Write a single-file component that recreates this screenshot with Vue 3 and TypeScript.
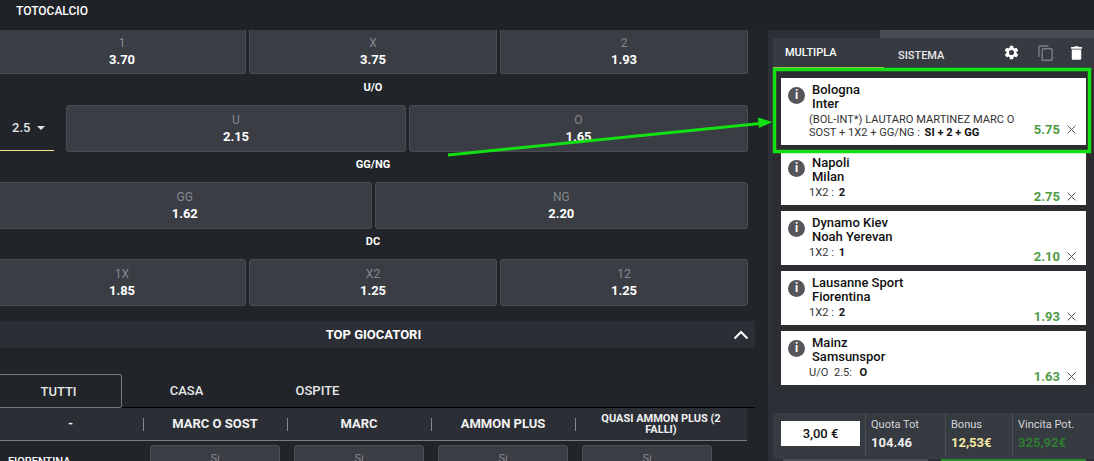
<script setup lang="ts">
const bets = [
  { home: 'Bologna', away: 'Inter', market: '(BOL-INT*) LAUTARO MARTINEZ MARC O SOST + 1X2 + GG/NG :', pick: 'SI + 2 + GG', odd: '5.75', big: true },
  { home: 'Napoli', away: 'Milan', market: '1X2 :', pick: '2', odd: '2.75', big: false },
  { home: 'Dynamo Kiev', away: 'Noah Yerevan', market: '1X2 :', pick: '1', odd: '2.10', big: false },
  { home: 'Lausanne Sport', away: 'Fiorentina', market: '1X2 :', pick: '2', odd: '1.93', big: false },
  { home: 'Mainz', away: 'Samsunspor', market: 'U/O  2.5: ', pick: 'O', odd: '1.63', big: false },
]
const columns = ['-', 'MARC O SOST', 'MARC', 'AMMON PLUS']
</script>

<template>
  <div class="page">
    <header class="topbar">TOTOCALCIO</header>
    <div class="body">
      <main class="main">
        <div class="odds odds--three">
          <button class="tile"><span>1</span><b>3.70</b></button>
          <button class="tile"><span>X</span><b>3.75</b></button>
          <button class="tile"><span>2</span><b>1.93</b></button>
        </div>
        <h4 class="market market--first">U/O</h4>
        <div class="odds odds--uo">
          <div class="select">2.5 <i class="caret"></i></div>
          <button class="tile"><span>U</span><b>2.15</b></button>
          <button class="tile"><span>O</span><b>1.65</b></button>
        </div>
        <h4 class="market">GG/NG</h4>
        <div class="odds odds--two">
          <button class="tile"><span>GG</span><b>1.62</b></button>
          <button class="tile"><span>NG</span><b>2.20</b></button>
        </div>
        <h4 class="market">DC</h4>
        <div class="odds odds--three">
          <button class="tile"><span>1X</span><b>1.85</b></button>
          <button class="tile"><span>X2</span><b>1.25</b></button>
          <button class="tile"><span>12</span><b>1.25</b></button>
        </div>

        <div class="section">
          <span>TOP GIOCATORI</span>
          <svg class="chevron" width="16" height="10" viewBox="0 0 16 10">
            <path d="M1.5 8.5 8 2l6.5 6.5" fill="none" stroke="#fff" stroke-width="2" />
          </svg>
        </div>

        <div class="tabs">
          <div class="tab tab--active">TUTTI</div>
          <div class="tab">CASA</div>
          <div class="tab">OSPITE</div>
        </div>

        <div class="thead">
          <div v-for="col in columns" :key="col" class="th">{{ col }}</div>
          <div class="th th--small">QUASI AMMON PLUS (2 FALLI)</div>
        </div>
        <div class="row">
          <div class="player">FIORENTINA</div>
          <div class="si-list">
            <div v-for="n in 4" :key="n" class="si">Si</div>
          </div>
        </div>
      </main>

      <aside class="slip">
        <div class="slip__strip"></div>
        <div class="slip__box">
          <div class="slip__tabs">
            <div class="slip__tab slip__tab--active">MULTIPLA</div>
            <div class="slip__tab slip__tab--second">SISTEMA</div>
            <div class="slip__tools">
              <svg width="17" height="17" viewBox="0 0 24 24" fill="#fff">
                <path d="M19.14 12.94a7.5 7.5 0 0 0 0-1.88l2.03-1.58a.5.5 0 0 0 .12-.61l-1.92-3.32a.5.5 0 0 0-.59-.22l-2.39.96a7 7 0 0 0-1.62-.94l-.36-2.54a.5.5 0 0 0-.48-.41h-3.84a.5.5 0 0 0-.47.41l-.36 2.54a7.3 7.3 0 0 0-1.63.94l-2.39-.96a.5.5 0 0 0-.59.22L2.74 8.87a.5.5 0 0 0 .12.61l2.03 1.58a7.5 7.5 0 0 0 0 1.88l-2.03 1.58a.5.5 0 0 0-.12.61l1.92 3.32a.5.5 0 0 0 .59.22l2.39-.96c.5.38 1.04.7 1.63.94l.36 2.54c.04.24.24.41.47.41h3.84c.24 0 .44-.17.48-.41l.36-2.54a7 7 0 0 0 1.62-.94l2.39.96c.22.08.47 0 .59-.22l1.92-3.32a.5.5 0 0 0-.12-.61zM12 15.6a3.6 3.6 0 1 1 0-7.2 3.6 3.6 0 0 1 0 7.2z" />
              </svg>
              <svg width="15" height="16" viewBox="0 0 15 16" fill="none" stroke="#7b7e84" stroke-width="1.4">
                <path d="M10.5 1H2a1 1 0 0 0-1 1v10" />
                <rect x="4.2" y="3.8" width="10" height="11.5" rx="1" />
              </svg>
              <svg width="11" height="14" viewBox="0 0 14 17" fill="#fff">
                <path d="M5 0h4l1 1h4v2H0V1h4zM1 4h12v11.5a1.5 1.5 0 0 1-1.5 1.5h-9A1.5 1.5 0 0 1 1 15.5z" />
              </svg>
            </div>
          </div>

          <div class="bets">
            <div v-for="bet in bets" :key="bet.home" :class="['bet', { 'bet--big': bet.big }]">
              <div class="bet__info">i</div>
              <div class="bet__teams">{{ bet.home }}<br />{{ bet.away }}</div>
              <div class="bet__market">{{ bet.market }} <b>{{ bet.pick }}</b></div>
              <div class="bet__odd">{{ bet.odd }}</div>
              <svg class="bet__close" width="9" height="9" viewBox="0 0 9 9">
                <path d="M.6.6l7.8 7.8M8.400.6.6 8.400" stroke="#555" stroke-width="1" />
              </svg>
            </div>
          </div>
        </div>

        <div class="footer">
          <div class="stake">3,00 €</div>
          <div class="stat stat--quota"><span>Quota Tot</span><b>104.46</b></div>
          <div class="stat stat--bonus"><span>Bonus</span><b class="yellow">12,53€</b></div>
          <div class="stat stat--win"><span>Vincita Pot.</span><b class="green">325,92€</b></div>
        </div>
        <div class="actions">
          <div class="action action--gray"></div>
          <div class="action action--green"></div>
        </div>
      </aside>
    </div>

    <!-- annotation drawn on top of the screenshot -->
    <svg class="annotation" width="1094" height="461" viewBox="0 0 1094 461">
      <rect x="774.5" y="69.5" width="315" height="82" fill="none" stroke="#12e012" stroke-width="3.5" />
      <path d="M448 155 760 123.500" fill="none" stroke="#12e012" stroke-width="3" />
      <path d="M772.500 122 758 117.500 759 128z" fill="#12e012" />
    </svg>
  </div>
</template>

<style>
html,
body {
  margin: 0;
  background: #212429;
}
</style>

<style scoped>
.page {
  position: relative;
  width: 1094px;
  height: 461px;
  overflow: hidden;
  background: #212429;
  color: #fff;
  font-family: Roboto, "Liberation Sans", sans-serif;
}

.topbar {
  box-sizing: border-box;
  height: 30px;
  padding: 4px 0 0 16px;
  background: #1f2227;
  font-size: 12px;
  font-weight: 500;
  line-height: 14px;
}

.body {
  display: flex;
}

.main {
  box-sizing: border-box;
  flex: none;
  width: 770px;
  height: 431px;
  margin-left: -2px;
  padding-right: 20px;
}

.odds {
  display: grid;
  gap: 3px;
  height: 47px;
}

.odds:first-child {
  height: 44px;
}

.odds--three {
  grid-template-columns: repeat(3, 1fr);
}

.odds--two {
  grid-template-columns: repeat(2, 1fr);
}

.odds--uo {
  grid-template-columns: 56px 340px 339px;
}

.odds--uo .tile {
  margin-left: 9px;
}

.odds--uo .tile:first-of-type {
  width: 340px;
}

.odds--uo .tile:last-of-type {
  width: 339px;
}

.tile {
  display: flex;
  flex-direction: column;
  align-items: center;
  justify-content: center;
  gap: 2px;
  padding: 0;
  border: 1px solid #4a4d54;
  border-radius: 3px;
  background: #3a3d44;
  color: #fff;
  font-family: inherit;
}

.odds:first-child .tile {
  border-top: 0;
  border-radius: 0 0 3px 3px;
}

.tile span {
  color: #85888e;
  font-size: 12px;
  line-height: 14px;
}

.tile b {
  font-size: 13px;
  font-weight: 700;
  line-height: 15px;
}

.market {
  height: 30px;
  margin: 0;
  font-size: 11px;
  font-weight: 700;
  line-height: 26px;
  text-align: center;
}

.market--first {
  height: 31px;
  line-height: 28px;
}

.select {
  box-sizing: border-box;
  height: 46px;
  padding: 15px 0 0 14px;
  border-bottom: 1px solid #f2e58c;
  color: #e4e5e6;
  font-size: 13px;
  font-weight: 500;
  line-height: 16px;
}

.caret {
  display: inline-block;
  margin-left: 3px;
  vertical-align: 2px;
  border-top: 4px solid #e4e5e6;
  border-right: 4px solid transparent;
  border-left: 4px solid transparent;
}

.section {
  position: relative;
  box-sizing: border-box;
  height: 27px;
  margin: 15px -7px 26px 0;
  padding-right: 6px;
  background: #2b2e35;
  font-size: 13px;
  font-weight: 700;
  line-height: 27px;
  text-align: center;
}

.chevron {
  position: absolute;
  top: 9px;
  right: 6px;
}

.tabs {
  display: flex;
  height: 33px;
  margin-right: -7px;
  border-bottom: 1px solid #000;
}

.tab {
  width: 131px;
  padding-top: 9px;
  color: #e8e8e8;
  font-size: 13px;
  font-weight: 500;
  line-height: 15px;
  text-align: center;
}

.tab--active {
  box-sizing: border-box;
  width: 124px;
  height: 34px;
  margin-right: -1px;
  padding: 9px 3px 0 0;
  border: 1px solid #75787e;
  border-radius: 2px;
}

.thead {
  display: grid;
  grid-template-columns: 145px 144px 144px 144px 172px;
  align-items: center;
  height: 32px;
  margin-right: 1px;
  background: #2b2e35;
  border-bottom: 1px solid #7a7d83;
}

.th {
  position: relative;
  color: #f1f1f1;
  font-size: 13px;
  font-weight: 700;
  line-height: 14px;
  text-align: center;
}

.th:not(:first-child)::before {
  content: "";
  position: absolute;
  top: 1px;
  left: 0;
  width: 1px;
  height: 13px;
  background: #85888e;
}

.th--small {
  padding: 0 10px;
  font-size: 11px;
  line-height: 11px;
}

.th--small::before {
  top: 5px !important;
}

.row {
  position: relative;
  display: flex;
  padding-top: 4px;
}

.player {
  position: absolute;
  top: 14px;
  left: 10px;
  font-size: 11px;
  font-weight: 500;
}

.si-list {
  display: flex;
  gap: 14px;
  margin-left: 152px;
}

.si {
  box-sizing: border-box;
  width: 130px;
  height: 40px;
  padding-top: 6px;
  border: 1px solid #4a4d54;
  border-radius: 3px;
  background: #3a3d44;
  color: #85888e;
  font-size: 11px;
  text-align: center;
}

.slip {
  position: relative;
  box-sizing: border-box;
  flex: none;
  width: 326px;
  height: 431px;
  background: #2c2f36;
}

.slip__strip {
  height: 8px;
  margin-left: 112px;
  background: #4a4d55;
}

.slip__box {
  height: 375px;
  margin-left: 5px;
}

.slip__tabs {
  display: flex;
  align-items: flex-start;
  height: 32px;
  background: #363a41;
}

.slip__tab {
  box-sizing: border-box;
  height: 32px;
  color: #fff;
  font-size: 11px;
  font-weight: 500;
  line-height: 14px;
}

.slip__tab--active {
  width: 111px;
  padding: 8px 0 0 12px;
  border-bottom: 3px solid #c3b74a;
}

.slip__tab--second {
  width: 105px;
  padding: 11px 0 0 14px;
  color: #e8e8e8;
}

.slip__tools {
  display: flex;
  align-items: center;
  gap: 18px;
  padding-top: 6px;
  margin-left: 14px;
}

.bets {
  display: flex;
  flex-direction: column;
  gap: 6px;
  padding: 8px 8px 0;
  background: #2c2c31;
}

.bet {
  position: relative;
  box-sizing: border-box;
  width: 305px;
  height: 54px;
  padding: 5px 70px 0 31px;
  background: #fff;
  color: #111;
}

.bet--big {
  height: 67px;
}

.bet__info {
  position: absolute;
  top: 9px;
  left: 7px;
  width: 17px;
  height: 17px;
  border-radius: 50%;
  background: #55565c;
  color: #fff;
  font-size: 12px;
  font-weight: 700;
  line-height: 17px;
  text-align: center;
}

.bet__teams {
  font-size: 13px;
  font-weight: 500;
  line-height: 13.5px;
}

.bet__market {
  margin: 3px 0 0 -3px;
  color: #333;
  font-size: 11.1px;
  line-height: 13px;
  white-space: pre-wrap;
}

.bet__market b {
  margin-left: 2px;
  color: #111;
  font-weight: 700;
}

.bet__odd {
  position: absolute;
  right: 26px;
  bottom: 1px;
  color: #4f9a45;
  font-size: 13px;
  font-weight: 700;
  line-height: 14px;
}

.bet__close {
  position: absolute;
  right: 10px;
  bottom: 4px;
}

.bet--big .bet__odd {
  bottom: 8px;
}

.bet--big .bet__close {
  bottom: 11px;
}

.footer {
  display: flex;
  height: 46px;
  margin-left: 5px;
  background: #363a41;
}

.stake {
  box-sizing: border-box;
  width: 79px;
  height: 25px;
  margin: 8px 5px 0 8px;
  background: #fff;
  color: #111;
  font-size: 13px;
  font-weight: 500;
  line-height: 25px;
  text-align: center;
}

.stat {
  display: flex;
  flex-direction: column;
  gap: 4px;
  box-sizing: border-box;
  height: 43px;
  padding: 5px 0 0 5px;
  border-left: 1px solid #4c4f56;
  color: #d6d7d9;
  font-size: 11px;
}

.stat b {
  color: #eee;
  font-size: 13px;
  line-height: 15px;
}

.stat--quota {
  width: 80px;
}

.stat--bonus {
  width: 67px;
}

.stat--win {
  width: 80px;
}

.yellow {
  color: #f4e8a4 !important;
}

.green {
  color: #2f7d30 !important;
}

.actions {
  display: flex;
  gap: 13px;
  margin-left: 15px;
}

.action {
  width: 145px;
  height: 2px;
}

.action--gray {
  background: #4a4d55;
}

.action--green {
  background: #2b8c2b;
}

.annotation {
  position: absolute;
  inset: 0;
  pointer-events: none;
}
</style>
